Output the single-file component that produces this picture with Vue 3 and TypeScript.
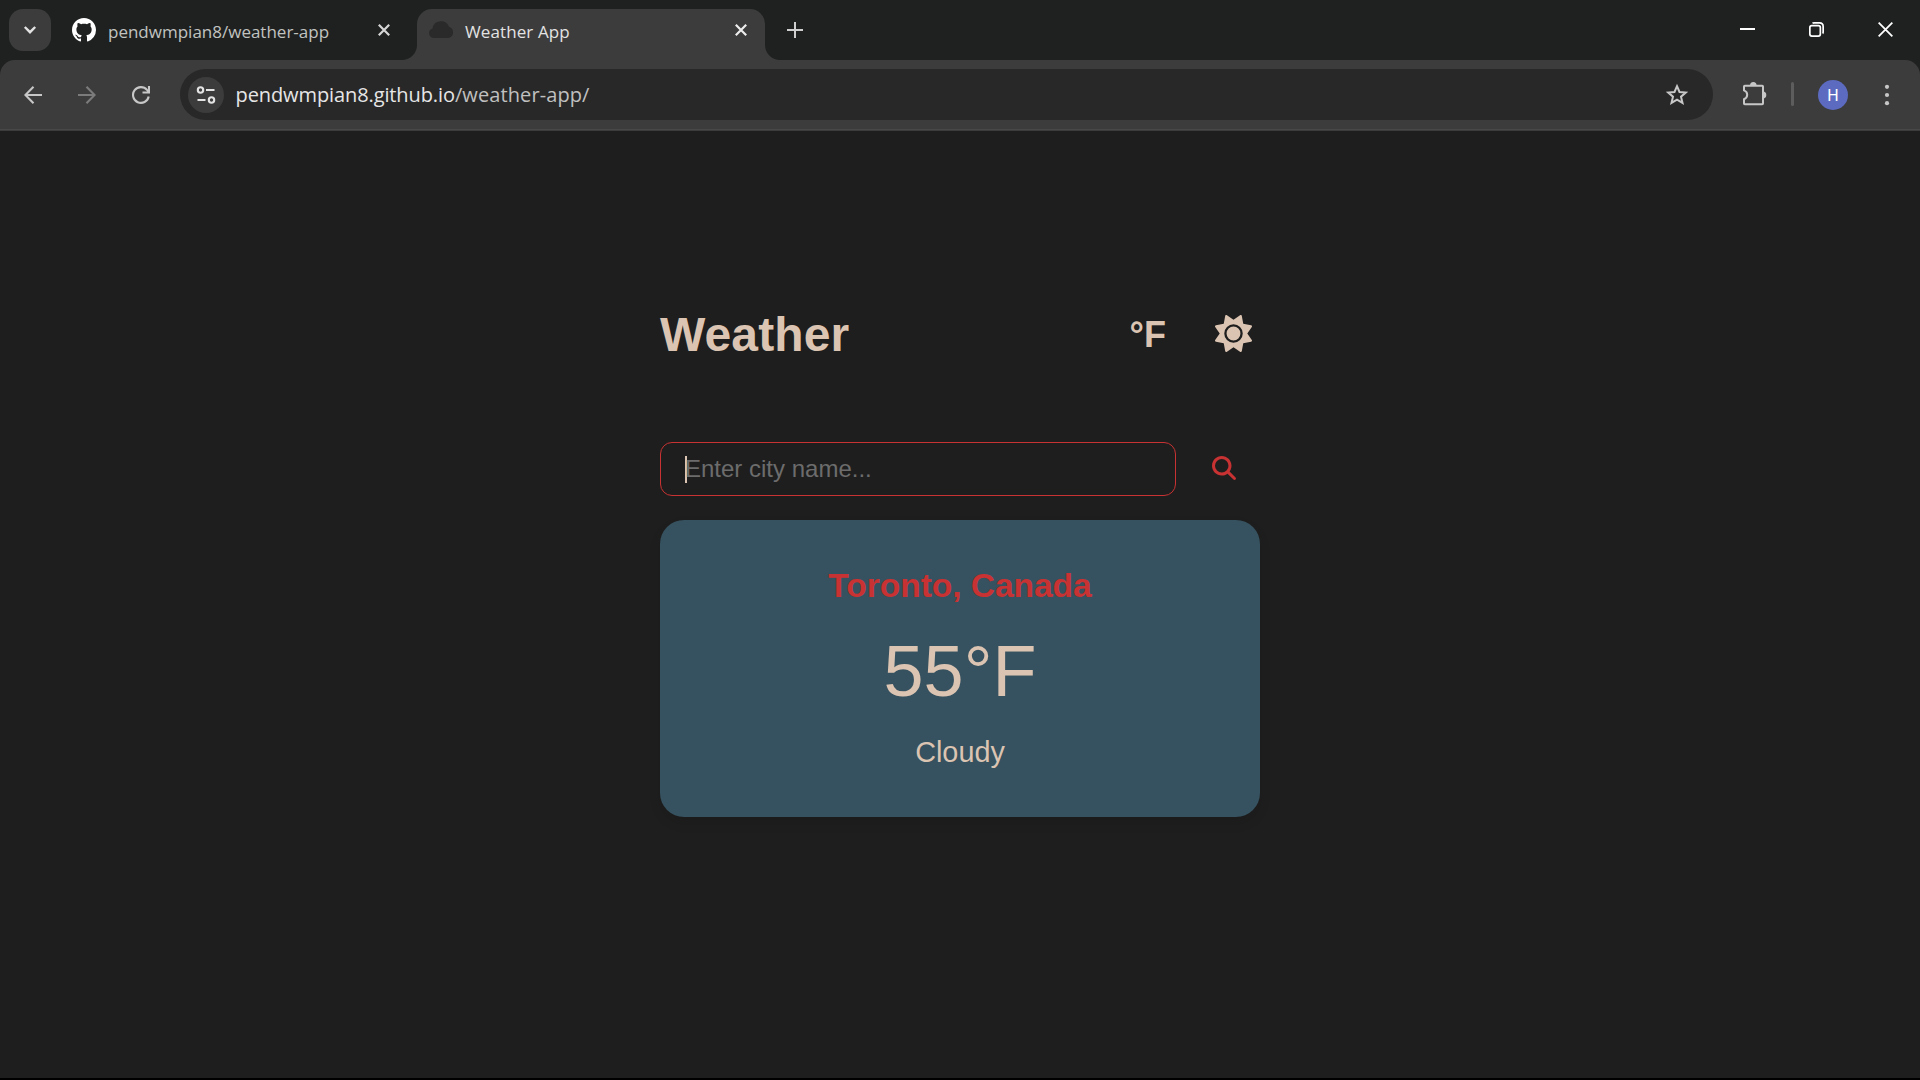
<script setup lang="ts">
import { ref } from 'vue'

const city = ref('Toronto, Canada')
const temperature = ref(55)
const unit = ref('°F')
const condition = ref('Cloudy')
</script>

<template>
  <div class="window">
    <header class="tabs">
      <button class="tab-search">
        <svg width="14" height="10" viewBox="0 0 14 10"><path d="M1.8 2 7 7.2 12.2 2" fill="none" stroke="#e3e3e3" stroke-width="2.4" /></svg>
      </button>
      <div class="tab">
        <svg class="favicon" width="24" height="24" viewBox="0 0 16 16" fill="#fff"><path d="M8 0C3.58 0 0 3.58 0 8c0 3.54 2.29 6.53 5.47 7.59.4.07.55-.17.55-.38 0-.19-.01-.82-.01-1.49-2.01.37-2.53-.49-2.69-.94-.09-.23-.48-.94-.82-1.13-.28-.15-.68-.52-.01-.53.63-.01 1.08.58 1.23.82.72 1.21 1.87.87 2.33.66.07-.52.28-.87.51-1.07-1.78-.2-3.64-.89-3.64-3.95 0-.87.31-1.59.82-2.15-.08-.2-.36-1.02.08-2.12 0 0 .67-.21 2.2.82.64-.18 1.32-.27 2-.27s1.36.09 2 .27c1.53-1.04 2.2-.82 2.2-.82.44 1.1.16 1.92.08 2.12.51.56.82 1.27.82 2.15 0 3.07-1.87 3.75-3.65 3.95.29.25.54.73.54 1.48 0 1.07-.01 1.93-.01 2.2 0 .21.15.46.55.38A8.01 8.01 0 0 0 16 8c0-4.42-3.58-8-8-8z" /></svg>
        <span class="tab-title first">pendwmpian8/weather-app</span>
        <svg class="close" width="12" height="12" viewBox="0 0 12 12"><path d="M.8.8l10.4 10.4M11.2.8.8 11.2" stroke="#d6d6d6" stroke-width="2.2" /></svg>
      </div>
      <div class="tab active">
        <svg class="favicon" width="24" height="24" viewBox="0 0 24 24"><path d="M5.2 20A5 5 0 0 1 0 15.300A5 5 0 0 1 3.500 10.500A8.600 8.600 0 0 1 20 8.800A5.800 5.800 0 0 1 24 14.500A5.200 5.200 0 0 1 19 20Z" fill="#2a2a2a" /></svg>
        <span class="tab-title second">Weather App</span>
        <svg class="close" width="12" height="12" viewBox="0 0 12 12"><path d="M.8.8l10.4 10.4M11.2.8.8 11.2" stroke="#ededed" stroke-width="2.2" /></svg>
      </div>
      <svg class="new-tab" width="16" height="16" viewBox="0 0 16 16"><path d="M0 8h16M8 0v16" stroke="#cfcfcf" stroke-width="2" /></svg>
      <div class="controls">
        <svg width="15" height="15" viewBox="0 0 15 15"><path d="M0 7h15" stroke="#fff" stroke-width="2" /></svg>
        <svg width="15" height="15" viewBox="0 0 15 15" fill="none" stroke="#fff" stroke-width="1.7"><rect x=".85" y="3.600" width="10.500" height="10.500" rx="2" /><path d="M3.500 1.200Q4 .85 5 .85H10.500Q14.150.85 14.150 4.500V10Q14.150 11 13.600 11.500" /></svg>
        <svg width="15" height="15" viewBox="0 0 16 16"><path d="M.7.7l14.600 14.600M15.300.7.7 15.300" stroke="#fff" stroke-width="1.900" /></svg>
      </div>
    </header>

    <div class="toolbar-wrap">
      <nav class="toolbar">
        <svg class="nav" width="18" height="18" viewBox="0 0 18 18" fill="none" stroke="#c7c7c7" stroke-width="2.100"><path d="M18 9H1.500M9.500.8 1.400 9l8.100 8.200" /></svg>
        <svg class="nav" width="18" height="18" viewBox="0 0 18 18" fill="none" stroke="#7b7b7b" stroke-width="2.100"><path d="M0 9h16.500M8.500.8 16.600 9l-8.100 8.200" /></svg>
        <svg class="nav" width="18" height="18" viewBox="0 0 18 18" fill="none" stroke="#c7c7c7" stroke-width="2.100"><path d="M16.700 10.500A7.900 7.900 0 1 1 15 3.900L17 6M17 0v6.500H10.500" /></svg>
        <div class="omnibox">
          <div class="site-info">
            <svg width="20" height="18" viewBox="0 0 20 18" fill="none" stroke="#e3e3e3" stroke-width="2.100"><circle cx="4.500" cy="4" r="2.700" /><path d="M10 4h8.500M1.500 14H9.500" /><circle cx="15.500" cy="14" r="2.700" /></svg>
          </div>
          <div class="url"><span class="host">pendwmpian8.github.io</span><span class="path">/weather-app/</span></div>
          <svg class="star" width="24" height="24" viewBox="0 0 24 24" fill="none" stroke="#c7c7c7" stroke-width="2"><path d="M12 3.200 14.500 9l6.300.6-4.800 4.100 1.500 6.200-5.500-3.300-5.500 3.300L8 13.700 3.200 9.600 9.500 9Z" /></svg>
        </div>
        <svg class="puzzle" width="25" height="26" viewBox="0 0 25 26"><path d="M2.800 4.800H20.200Q21 4.800 21 5.600V22.400Q21 23.200 20.200 23.200H2.800Q2 23.200 2 22.400V18.200Q5.200 17 5.200 13.800T2 9.400V5.600Q2 4.800 2.800 4.800Z" fill="none" stroke="#c7c7c7" stroke-width="2" /><path d="M8 4.500a3.300 3.500 0 0 1 6.600 0ZM21 10.500a3.300 3.500 0 0 1 0 7Z" fill="#c7c7c7" /></svg>
        <i class="divider"></i>
        <span class="avatar">H</span>
        <svg class="menu" width="6" height="22" viewBox="0 0 6 22" fill="#c7c7c7"><circle cx="3" cy="2.800" r="2.100" /><circle cx="3" cy="11" r="2.100" /><circle cx="3" cy="19.200" r="2.100" /></svg>
      </nav>
    </div>

    <main class="page">
      <section class="app">
        <div class="heading">
          <h1>Weather</h1>
          <button class="unit">{{ unit }}</button>
          <button class="theme">
            <svg width="37" height="37" viewBox="0 0 512 512" fill="#dbc4b2"><path d="M361.5 1.2c5 2.1 8.6 6.6 9.6 11.900L391 121l107.900 19.800c5.300 1 9.800 4.600 11.900 9.600s1.500 10.700-1.600 15.200L446.900 256l62.300 90.300c3.100 4.500 3.700 10.200 1.600 15.200s-6.600 8.600-11.900 9.600L391 391 371.100 498.900c-1 5.300-4.600 9.800-9.600 11.900s-10.700 1.500-15.200-1.600L256 446.900l-90.300 62.300c-4.500 3.100-10.200 3.700-15.200 1.600s-8.600-6.600-9.600-11.900L121 391 13.100 371.100c-5.300-1-9.800-4.600-11.900-9.600s-1.500-10.700 1.600-15.200L65.100 256 2.800 165.700c-3.100-4.500-3.700-10.200-1.600-15.200s6.600-8.600 11.900-9.600L121 121 140.900 13.100c1-5.300 4.600-9.800 9.600-11.900s10.700-1.500 15.200 1.600L256 65.100 346.300 2.800c4.500-3.100 10.200-3.700 15.200-1.600zM160 256a96 96 0 1 1 192 0 96 96 0 1 1-192 0zm224 0a128 128 0 1 0-256 0 128 128 0 1 0 256 0z" /></svg>
          </button>
        </div>
        <div class="search">
          <div class="field"><i class="caret"></i><span>Enter city name...</span></div>
          <svg class="lens" width="24" height="24" viewBox="0 0 512 512" fill="#c83232"><path d="M416 208c0 45.900-14.900 88.300-40 122.700L502.600 457.400c12.500 12.500 12.500 32.800 0 45.300s-32.800 12.500-45.300 0L330.700 376c-34.400 25.200-76.800 40-122.700 40C93.100 416 0 322.900 0 208S93.100 0 208 0S416 93.100 416 208zM208 352a144 144 0 1 0 0-288 144 144 0 1 0 0 288z" /></svg>
        </div>
        <article class="card">
          <h2>{{ city }}</h2>
          <p class="temp">{{ temperature }}{{ unit }}</p>
          <p class="condition">{{ condition }}</p>
        </article>
      </section>
    </main>
  </div>
</template>

<style>
body {
  margin: 0;
  background: #1e1e1e;
}
</style>

<style scoped>
* {
  box-sizing: border-box;
}
svg {
  display: block;
  flex: none;
}
button {
  padding: 0;
  border: 0;
  background: none;
  font: inherit;
  color: inherit;
}
.window {
  display: flex;
  flex-direction: column;
  width: 1920px;
  height: 1080px;
  overflow: hidden;
  background: #1e1e1e;
  border-bottom: 2px solid #000;
}
.tabs {
  display: flex;
  flex: none;
  height: 60px;
  padding: 9px 27px 0 9px;
  background: #1f2120;
  font-family: "Open Sans", "Noto Sans", sans-serif;
}
.tab-search {
  display: flex;
  align-items: center;
  justify-content: center;
  width: 42px;
  height: 42px;
  border-radius: 14px;
  background: #3c3c3c;
}
.tab {
  display: flex;
  align-items: flex-start;
  width: 345px;
  margin-left: 9px;
  padding: 9px 9px 0 12px;
}
.tab.active {
  position: relative;
  width: 348px;
  margin-left: 12px;
  padding-right: 12px;
  border-radius: 15px 15px 0 0;
  background: #3c3c3c;
}
.tab.active::before,
.tab.active::after {
  content: "";
  position: absolute;
  bottom: 0;
  width: 15px;
  height: 15px;
}
.tab.active::before {
  left: -15px;
  background: radial-gradient(circle at 0 0, #1f2120 14.5px, #3c3c3c 15.5px);
}
.tab.active::after {
  right: -15px;
  background: radial-gradient(circle at 100% 0, #1f2120 14.5px, #3c3c3c 15.5px);
}
.tab-title {
  margin: 1px 0 0 12px;
  font-size: 17px;
  line-height: 26px;
  white-space: nowrap;
}
.tab-title.first {
  color: #c1c3c1;
}
.tab-title.second {
  color: #e3e3e3;
  letter-spacing: 0.1px;
}
.close {
  margin: 6px 6px 0 auto;
}
.new-tab {
  margin: 13px 0 0 22px;
}
.controls {
  display: flex;
  gap: 54px;
  margin: 13px 0 0 auto;
}
.toolbar-wrap {
  flex: none;
  height: 71px;
  background: #1f2120;
}
.toolbar {
  display: flex;
  align-items: center;
  height: 71px;
  padding: 0 30px 3px 24px;
  border-radius: 15px 15px 0 0;
  background: linear-gradient(#3c3c3c 69px, #484848 69px, #484848 70px, #3c3c3c 70px);
}
.nav {
  margin: 2px 36px 0 0;
}
.nav + .nav + .nav {
  margin-right: 30px;
}
.omnibox {
  display: flex;
  align-items: center;
  width: 1533px;
  height: 51px;
  margin-top: 1px;
  padding: 0 24px 0 7.5px;
  border-radius: 26px;
  background: #282828;
}
.site-info {
  display: flex;
  align-items: center;
  justify-content: center;
  width: 36px;
  height: 36px;
  border-radius: 50%;
  background: #3c3c3c;
}
.url {
  margin-left: 12px;
  font: 20px/30px "Open Sans", "Noto Sans", sans-serif;
  white-space: nowrap;
}
.host {
  color: #e6e6e6;
  letter-spacing: -0.1px;
}
.path {
  color: #c0c0c0;
  letter-spacing: 0.1px;
}
.star {
  margin-left: auto;
}
.puzzle {
  margin-left: 28.5px;
}
.divider {
  width: 3px;
  height: 24px;
  margin-left: 24.5px;
  border-radius: 2px;
  background: #5d5d5d;
}
.avatar {
  width: 30px;
  height: 30px;
  margin: 2px 0 0 24px;
  border-radius: 50%;
  background: #5c6bc0;
  color: #fff;
  font: 16px/31px Roboto, sans-serif;
  text-align: center;
}
.menu {
  margin: 2px 0 0 36px;
}
.page {
  flex: 1;
  display: flex;
  justify-content: center;
  padding-top: 168px;
  color: #dbc4b2;
  font-family: "Liberation Sans", Arial, sans-serif;
}
.app {
  width: 600px;
}
.heading {
  display: flex;
  align-items: center;
  height: 70px;
}
h1 {
  margin: 1px auto 0 0;
  font-size: 48px;
  line-height: 54px;
  letter-spacing: 0.1px;
}
.unit {
  margin-top: 1px;
  font-size: 36px;
  font-weight: 700;
  line-height: 42px;
}
.theme {
  margin: -2px 8.5px 0 48.5px;
}
.search {
  display: flex;
  align-items: center;
  height: 54px;
  margin-top: 73px;
}
.lens {
  margin-top: -2px;
}
.field {
  display: flex;
  align-items: center;
  width: 516px;
  height: 54px;
  margin-right: 36px;
  padding-left: 24px;
  border: 1px solid #c83232;
  border-radius: 12px;
  color: #6c6c6c;
  font-size: 24px;
}
.caret {
  width: 2px;
  height: 27px;
  margin-right: -2px;
  background: #dbc4b2;
}
.card {
  height: 297px;
  margin-top: 24px;
  padding-top: 47px;
  border-radius: 24px;
  background: #36515f;
  box-shadow: 0 6px 12px rgba(0, 0, 0, 0.1);
  text-align: center;
}
h2 {
  margin: 0;
  color: #c83232;
  font-size: 33.6px;
  line-height: 38px;
  letter-spacing: -0.06px;
}
.temp {
  margin: 25px 0 0;
  font-size: 72px;
  line-height: 82px;
}
.condition {
  margin: 24px 0 0;
  font-size: 28.8px;
  line-height: 33px;
}
</style>
